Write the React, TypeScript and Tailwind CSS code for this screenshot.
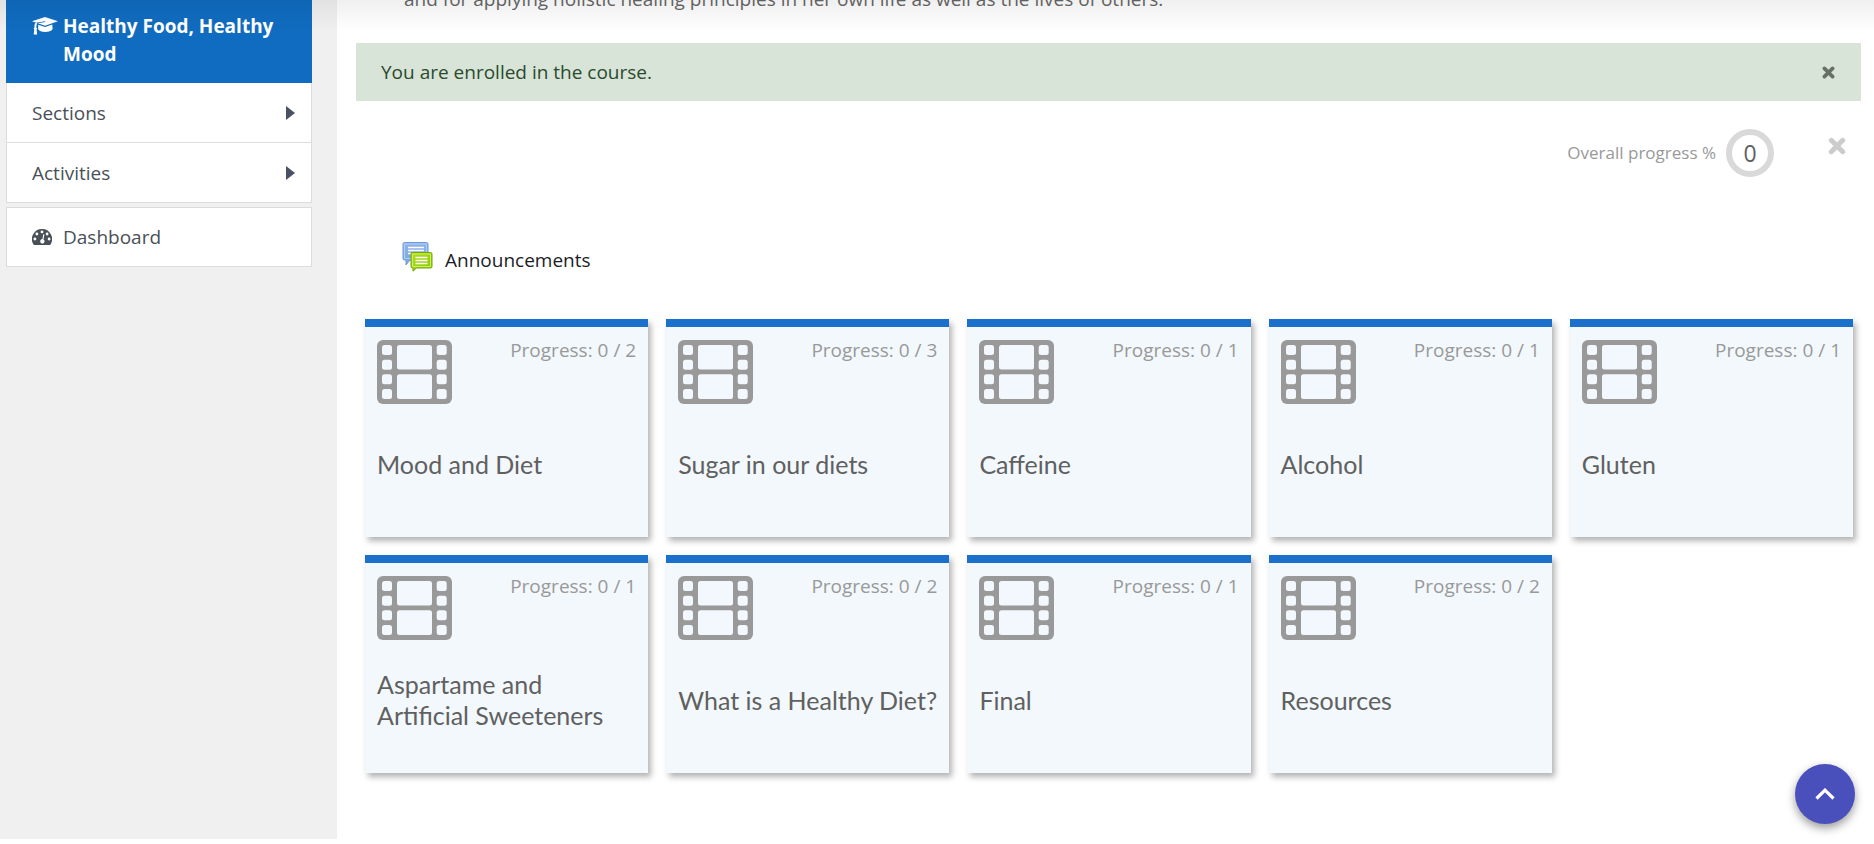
import React from "react";

type Tile = { title: string; done: number; total: number };

const tiles: Tile[] = [
  { title: "Mood and Diet", done: 0, total: 2 },
  { title: "Sugar in our diets", done: 0, total: 3 },
  { title: "Caffeine", done: 0, total: 1 },
  { title: "Alcohol", done: 0, total: 1 },
  { title: "Gluten", done: 0, total: 1 },
  { title: "Aspartame and Artificial Sweeteners", done: 0, total: 1 },
  { title: "What is a Healthy Diet?", done: 0, total: 2 },
  { title: "Final", done: 0, total: 1 },
  { title: "Resources", done: 0, total: 2 },
];

function FilmIcon() {
  return (
    <svg viewBox="0 0 75 64" className="h-16 w-[75px] shrink-0" aria-hidden="true">
      <rect width="75" height="64" rx="6" fill="#999" />
      <g fill="#f2f8fd">
        {[5, 19.7, 34.3, 49].map((y) => (
          <React.Fragment key={y}>
            <rect x="5" y={y} width="10" height="10" rx="2.5" />
            <rect x="59.7" y={y} width="10" height="10" rx="2.5" />
          </React.Fragment>
        ))}
        <rect x="20" y="5" width="35" height="24.4" rx="2.5" />
        <rect x="20" y="34.3" width="35" height="24.7" rx="2.5" />
      </g>
    </svg>
  );
}

function GraduationIcon() {
  return (
    <svg viewBox="0 0 26 18" className="mt-[5px] h-[18px] w-[26px] shrink-0" aria-hidden="true">
      <g fill="currentColor">
        <path d="M13 0 26 4.300 13 8.800 5.800 6.300 13.200 5 13 4.300 4.300 5.800 0 4.300Z" />
        <path d="M6.200 7.700 13 10l7.300-2.400.3 4.400c-.6 1.700-3.700 2.900-7.300 2.900-3.500 0-6.500-1.200-7.100-2.700Z" />
        <path d="M4.300 5.800 2.900 6.500c-.4 1.200-.5 2.800-.5 4a1.500 1.500 0 0 0-.1 2.300L1.700 17.500h3.400l-.5-4.700a1.500 1.500 0 0 0-.3-2.300c0-1.600.2-3 .9-4.200Z" />
      </g>
    </svg>
  );
}

function TimesIcon({ className }: { className: string }) {
  return (
    <svg viewBox="0 0 18 18" className={className} aria-hidden="true">
      <path d="M3.300 3.300 14.700 14.700M14.700 3.300 3.300 14.700" stroke="currentColor" strokeWidth="5" strokeLinecap="round" fill="none" />
    </svg>
  );
}

function DashboardIcon() {
  return (
    <svg viewBox="0 0 20 17" className="h-[17px] w-5 shrink-0" aria-hidden="true">
      <path d="M10 0a10 10 0 0 0-8.500 15.400c.3.4.7.6 1.100.6h14.800c.5 0 .9-.2 1.100-.6A10 10 0 0 0 10 0Z" fill="currentColor" />
      <g fill="#fff">
        <circle cx="10" cy="2.900" r="1.400" />
        <circle cx="4.900" cy="5" r="1.400" />
        <circle cx="15.100" cy="5" r="1.400" />
        <circle cx="2.900" cy="10" r="1.400" />
        <circle cx="17.100" cy="10" r="1.400" />
        <path d="m11.300 5.200-.9 4.900a2.200 2.200 0 1 0 1.100.3l.9-4.900Z" />
      </g>
    </svg>
  );
}

function ForumIcon() {
  return (
    <svg viewBox="0 0 32 32" className="h-8 w-8 shrink-0" aria-hidden="true">
      <defs>
        <linearGradient id="blueBubble" x1="0" y1="0" x2="0" y2="1">
          <stop offset="0" stopColor="#8db4ea" />
          <stop offset="1" stopColor="#7ba6e2" />
        </linearGradient>
        <linearGradient id="greenBubble" x1="0" y1="0" x2="1" y2="1">
          <stop offset="0" stopColor="#b4e01c" />
          <stop offset="1" stopColor="#86c80a" />
        </linearGradient>
      </defs>
      <path d="M3.500 1.500h22a1.500 1.500 0 0 1 1.500 1.500v14.500a1.500 1.500 0 0 1-1.500 1.500H9l-4 5v-5H3.500A1.500 1.500 0 0 1 2 17.500V3a1.500 1.500 0 0 1 1.500-1.500Z" fill="url(#blueBubble)" stroke="#6d9bdc" />
      <path d="M3.500 3h22v14.500h-22z" fill="none" stroke="#b5cff4" />
      <path d="M7 6.500h16M7 9.500h16M7 12.500h3" stroke="#fff" strokeWidth="1.400" />
      <path d="M11.500 11.500h18a1.500 1.500 0 0 1 1.500 1.500v12.500a1.500 1.500 0 0 1-1.500 1.500H15.500l-3.500 3.200V27h-.5a1.500 1.500 0 0 1-1.500-1.500V13a1.500 1.500 0 0 1 1.500-1.500Z" fill="url(#greenBubble)" stroke="#72a80c" />
      <path d="M11.500 13h18v12.500h-18z" fill="none" stroke="#d0ee5c" />
      <path d="M14.500 16.500h12M14.500 19.500h12M14.500 22.500h12" stroke="#fff" strokeWidth="1.400" />
    </svg>
  );
}

function Caret() {
  return (
    <svg viewBox="0 0 9 14" className="h-[14px] w-[9px]" aria-hidden="true">
      <path d="M0 0 9 7 0 14Z" fill="#495162" />
    </svg>
  );
}

function Sidebar() {
  return (
    <aside className="w-[337px] shrink-0 bg-[#f0f0f0] pr-[25px] pl-1.5">
      <nav className="text-[19px] leading-7 text-[#495057]">
        <a href="#course" className="flex h-[83px] items-start gap-[5px] bg-[#106cc0] pt-3 pr-6 pl-[26px] font-bold text-white">
          <GraduationIcon />
          <span>Healthy Food, Healthy Mood</span>
        </a>
        {["Sections", "Activities"].map((label) => (
          <a key={label} href={"#" + label.toLowerCase()} className="flex h-[60px] items-center justify-between border border-t-0 border-[#dcdcdc] bg-white pr-4 pl-[25px]">
            {label}
            <Caret />
          </a>
        ))}
        <a href="#dashboard" className="mt-1 flex h-[60px] items-center gap-[11px] border border-[#dcdcdc] bg-white pl-[25px]">
          <DashboardIcon />
          Dashboard
        </a>
      </nav>
    </aside>
  );
}

function TileCard({ tile }: { tile: Tile }) {
  return (
    <li>
      <a href="#tile" className="flex h-[218px] flex-col border-t-8 border-[#1a70ca] bg-[#f2f8fc] px-3 pt-[13px] shadow-[3px_4px_6px_rgba(0,0,0,0.3)]">
        <div className="flex items-start justify-between">
          <FilmIcon />
          <span className="text-[19px] leading-5 text-[#999]">
            Progress: {tile.done} / {tile.total}
          </span>
        </div>
        <div className="flex h-[120px] items-center">
          <h3 className="font-['Lato',sans-serif] text-[25px] leading-[31px] text-[#606060]">{tile.title}</h3>
        </div>
      </a>
    </li>
  );
}

export default function App() {
  return (
    <div className="relative flex h-screen overflow-hidden bg-white pb-[5px] font-['Open_Sans',sans-serif]">
      <Sidebar />
      <main className="min-w-0 flex-1 pr-[13px] pl-[19px]">
        <div className="flex h-[43px] items-start">
          <p className="-mt-[17px] pl-12 text-[19px] leading-8 text-[#666]">
            and for applying holistic healing principles in her own life as well as the lives of others.
          </p>
        </div>
        <div role="alert" className="flex h-[58px] items-center justify-between bg-[#d8e4d8] pr-[26px] pl-[25px] text-[19px] text-[#2b4a2d]">
          You are enrolled in the course.
          <button type="button" aria-label="Dismiss" className="text-[#667066]">
            <TimesIcon className="h-[13px] w-[13px]" />
          </button>
        </div>
        <div className="flex items-start justify-end pt-7 pr-[15px]">
          <div className="flex items-center gap-2.5">
            <span className="text-[17px] text-[#999]">Overall progress %</span>
            <span className="flex size-12 items-center justify-center rounded-full border-[6px] border-[#d9d9d9] text-[23px] text-[#606060]">0</span>
          </div>
          <button type="button" aria-label="Close section" className="mt-2 ml-[54px] text-[#ccc]">
            <TimesIcon className="h-[18px] w-[18px]" />
          </button>
        </div>
        <a href="#announcements" className="mt-16 ml-[45px] flex w-fit items-start gap-3 text-[19px] leading-7 text-[#1d1d26]">
          <ForumIcon />
          <span className="pt-[5px]">Announcements</span>
        </a>
        <ul className="mt-[45px] mr-2 ml-[9px] grid grid-cols-5 gap-[18px]">
          {tiles.map((tile) => (
            <TileCard key={tile.title} tile={tile} />
          ))}
        </ul>
      </main>
      <div className="pointer-events-none absolute inset-x-0 top-0 h-8 bg-linear-to-b from-black/6 to-transparent" />
      <button type="button" aria-label="Back to top" className="absolute right-[19px] bottom-5 flex size-[60px] items-center justify-center rounded-full bg-[#4a50bb] shadow-[0_4px_10px_rgba(0,0,0,0.4)]">
        <svg viewBox="0 0 20 12" className="h-3 w-5" aria-hidden="true">
          <path d="M1.500 10.500 10 2.200l8.500 8.300" fill="none" stroke="#fff" strokeWidth="3.200" />
        </svg>
      </button>
    </div>
  );
}
